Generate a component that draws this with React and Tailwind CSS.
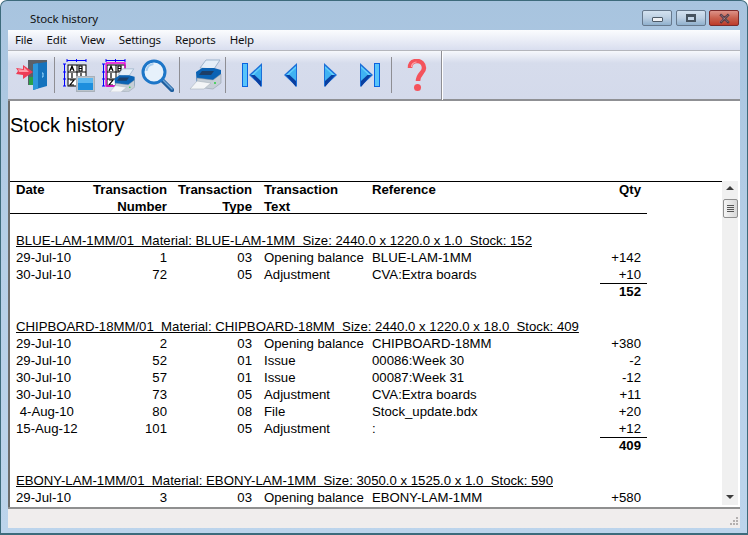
import React from 'react';

const groups = [
  {
    title: 'BLUE-LAM-1MM/01  Material: BLUE-LAM-1MM  Size: 2440.0 x 1220.0 x 1.0  Stock: 152',
    rows: [
      ['29-Jul-10', '1', '03', 'Opening balance', 'BLUE-LAM-1MM', '+142'],
      ['30-Jul-10', '72', '05', 'Adjustment', 'CVA:Extra boards', '+10'],
    ],
    total: '152',
  },
  {
    title: 'CHIPBOARD-18MM/01  Material: CHIPBOARD-18MM  Size: 2440.0 x 1220.0 x 18.0  Stock: 409',
    rows: [
      ['29-Jul-10', '2', '03', 'Opening balance', 'CHIPBOARD-18MM', '+380'],
      ['29-Jul-10', '52', '01', 'Issue', '00086:Week 30', '-2'],
      ['30-Jul-10', '57', '01', 'Issue', '00087:Week 31', '-12'],
      ['30-Jul-10', '73', '05', 'Adjustment', 'CVA:Extra boards', '+11'],
      ['\u00a04-Aug-10', '80', '08', 'File', 'Stock_update.bdx', '+20'],
      ['15-Aug-12', '101', '05', 'Adjustment', ':', '+12'],
    ],
    total: '409',
  },
  {
    title: 'EBONY-LAM-1MM/01  Material: EBONY-LAM-1MM  Size: 3050.0 x 1525.0 x 1.0  Stock: 590',
    rows: [['29-Jul-10', '3', '03', 'Opening balance', 'EBONY-LAM-1MM', '+580']],
  },
];

const Sep = ({ className }) => <div className={`w-px h-[36px] bg-[#8e8e94] shrink-0 ${className}`} />;

const MiniGrid = () => (
  <g>
    <rect x="5" y="6" width="18" height="21" fill="#fff" stroke="#000" />
    <path d="M14 6v21M5 13h18M5 20h18" stroke="#000" />
    <path d="M7 12l2-5 2 5M8 10h2M16 7h3v5h-3zM16 9.500h3M9 14v5M18 14v5M7 21h4l-4 5h4" stroke="#000" fill="none" strokeWidth="1.2" />
    <path d="M4 1.500h19M4 0v3M13.500 0v3M23 0v3M1.500 5v22M0 5h3M0 13h3M0 20h3M0 27h3" stroke="#0000ff" fill="none" />
  </g>
);

const PrinterShape = ({ x = 0, y = 0, s = 1 }) => (
  <g transform={`translate(${x} ${y}) scale(${s})`}>
    <path d="M11 9l6-8h14l-6 9z" fill="#e4eef8" stroke="#9fb5cc" />
    <path d="M7 13l6-4h12l7 2v11l-8 6H8z" fill="#0b63b4" />
    <path d="M8 19l16 2 8-6v9l-8 6-16-2z" fill="#c6ced6" stroke="#8a97a4" strokeWidth=".5" />
    <path d="M13 12h12l-3 4H10z" fill="#1d3f68" />
    <path d="M8 22L1 30h14l7-6z" fill="#f3f5f7" stroke="#a8b3bd" strokeWidth=".6" />
    <circle cx="26" cy="24" r="1" fill="#2bd23f" />
  </g>
);

const PrinterIcon = () => (
  <svg width="33" height="33" viewBox="0 0 33 33" className="shrink-0">
    <PrinterShape />
  </svg>
);

const ExitIcon = () => (
  <svg width="32" height="33" viewBox="0 0 32 33" className="shrink-0">
    <path d="M12 1h19v4H17v21h-5z" fill="#5a6068" />
    <rect x="13" y="18" width="4" height="8" fill="#2aa14a" />
    <path d="M17 5l14-2v24l-14 4z" fill="#1573bd" />
    <path d="M17 5l5-.7v25.300l-5 1.400z" fill="#2d97dc" />
    <path d="M26 14h1v4h-1" stroke="#9fdcff" fill="none" />
    <path d="M0 9l7 1V6l10 7-10 7v-4l-7-1 2-3z" fill="#ee3c55" />
    <path d="M2 10l6 1V8l5 5H3z" fill="#ff9aa6" />
  </svg>
);

const GridIcon = () => (
  <svg width="32" height="33" viewBox="0 0 32 33" className="shrink-0">
    <MiniGrid />
    <rect x="13.500" y="17.500" width="18" height="15" fill="#bcc4cc" stroke="#a9b1ba" />
    <rect x="15" y="19" width="15" height="12" fill="#1e8fdd" />
    <rect x="15" y="19" width="15" height="5" fill="#5cb8f0" />
  </svg>
);

const PrintGridIcon = () => (
  <svg width="33" height="33" viewBox="0 0 33 33" className="shrink-0">
    <MiniGrid />
    <path d="M4 4h19v9M4 4v23h9" stroke="#f000d8" strokeWidth="1.300" fill="none" />
    <PrinterShape x={7} y={9} s={0.8} />
  </svg>
);

const Magnifier = () => (
  <svg width="33" height="33" viewBox="0 0 33 33" className="shrink-0">
    <path d="M20 20l11 11" stroke="#1f5f9f" strokeWidth="4.500" strokeLinecap="round" />
    <path d="M21 20l10 10" stroke="#6fa5d6" strokeWidth="1.500" strokeLinecap="round" />
    <circle cx="13" cy="13" r="11" fill="#e6f1fb" stroke="#1d76c8" strokeWidth="3" />
    <path d="M5.500 12a8 8 0 0 1 7-7" stroke="#a8cdee" strokeWidth="2" fill="none" />
  </svg>
);

const NavIcon = ({ dir, bar, width }) => {
  const body = (
    <g>
      {bar && <rect x="0.500" y="0.500" width="5" height="23" fill="#58c4fa" stroke="#0a63e0" />}
      <path d={bar ? 'M20 0v24L7 12z' : 'M14 0v24L1 12z'} fill="#1b6fd8" />
      <path d={bar ? 'M19 3v9H9z' : 'M13 3v9H3z'} fill="#62d0fb" />
      <path d={bar ? 'M9 12h10v12z' : 'M3 12h10v12z'} fill="#0a3fa0" />
      <path d={bar ? 'M19 5v13l-7-6.500z' : 'M13 5v13l-7-6.500z'} fill="#3fb2f2" />
    </g>
  );
  return (
    <svg width={width} height="24" viewBox={`0 0 ${width} 24`} className="shrink-0">
      {dir === 'left' ? body : <g transform={`translate(${width} 0) scale(-1 1)`}>{body}</g>}
    </svg>
  );
};

const Question = () => (
  <svg width="20" height="33" viewBox="0 0 20 33" className="shrink-0">
    <path d="M3 9c0-5 3-7 7-7s7 3 7 7c0 5-6 6-6 13" fill="none" stroke="#f4535c" strokeWidth="4.500" />
    <path d="M4.500 8c0-3 2.500-5 5-5" fill="none" stroke="#ffa8ac" strokeWidth="1.200" />
    <circle cx="10.500" cy="28.500" r="3.500" fill="#f4535c" />
  </svg>
);

const WinButton = ({ red, children }) => (
  <div className={`w-[30px] h-[16px] rounded-[2px] border flex items-center justify-center ${red ? 'border-[#7a2a2a] bg-gradient-to-b from-[#dd9288] via-[#c9614f] to-[#bd3a2a]' : 'border-[#66788c] bg-gradient-to-b from-[#d3e2f0] via-[#bccfe2] to-[#8fb0cd]'}`}>
    {children}
  </div>
);

const Cells = ({ row }) => (
  <div className="flex h-[17px] items-center">
    <div className="w-[6px]" />
    <div className="w-[62px] whitespace-pre">{row[0]}</div>
    <div className="w-[89px] text-right">{row[1]}</div>
    <div className="w-[85px] text-right">{row[2]}</div>
    <div className="w-[12px]" />
    <div className="w-[108px] whitespace-pre">{row[3]}</div>
    <div className="w-[200px]">{row[4]}</div>
    <div className="w-[69px] text-right">{row[5]}</div>
  </div>
);

export default function App() {
  return (
    <div className="w-[748px] h-[535px] overflow-hidden flex flex-col rounded-t-[7px] border border-b-[2px] border-[#3d6b7c] bg-gradient-to-b from-[#a8c4df] via-[#b6cfe7] to-[#bcd4ec] px-[7px] pb-[5px] font-['Liberation_Sans',sans-serif] text-[13.2px] text-[#000]">
      {/* title bar */}
      <div className="h-[29px] flex shrink-0 items-start">
        <span className="ml-[22px] mt-[10px] font-['Noto_Sans',sans-serif] text-[11.5px] leading-[16px] tracking-[-0.1px] text-[#111]">Stock history</span>
        <div className="ml-auto mt-[9px] mr-[1px] flex">
          <WinButton>
            <div className="w-[11px] h-[5px] bg-[#eef1f5] border border-[#4e5b68] rounded-[1px] mt-[3px]" />
          </WinButton>
          <div className="w-[4px]" />
          <WinButton>
            <div className="w-[10px] h-[8px] border-[2px] border-t-[3px] border-[#46535f] bg-[#c4d6e8]" />
          </WinButton>
          <div className="w-[3px]" />
          <WinButton red>
            <span className="text-[15px] leading-none font-bold text-[#e9e9ec] [-webkit-text-stroke:0.5px_#55303a]">✕</span>
          </WinButton>
        </div>
      </div>

      <div className="flex-1 flex flex-col min-h-0 bg-white">
        {/* menu */}
        <div className="h-[20px] shrink-0 flex items-center gap-[14px] pl-[7px] bg-gradient-to-b from-[#fbfcfe] to-[#d9deef] font-['Noto_Sans',sans-serif] text-[11.5px] tracking-[-0.2px] text-[#111]">
          <span>File</span>
          <span>Edit</span>
          <span>View</span>
          <span>Settings</span>
          <span>Reports</span>
          <span>Help</span>
        </div>
        <div className="h-[1px] bg-[#b4b6bc] shrink-0" />

        {/* toolbar */}
        <div className="h-[50px] shrink-0 flex items-center border-b-[2px] border-[#8f9094] bg-gradient-to-b from-[#f6f8fc] from-0% via-[#d6dcec] via-25% to-[#d4daeb] pl-[8px]">
          <ExitIcon />
          <Sep className="ml-[6px]" />
          <div className="ml-[8px]"><GridIcon /></div>
          <div className="ml-[7px]"><PrintGridIcon /></div>
          <div className="ml-[6px]"><Magnifier /></div>
          <Sep className="ml-[5px]" />
          <div className="ml-[9px]"><PrinterIcon /></div>
          <Sep className="ml-[3px]" />
          <div className="ml-[16px]"><NavIcon dir="left" bar width={20} /></div>
          <div className="ml-[21px]"><NavIcon dir="left" width={15} /></div>
          <div className="ml-[25px]"><NavIcon dir="right" width={15} /></div>
          <div className="ml-[22px]"><NavIcon dir="right" bar width={20} /></div>
          <Sep className="ml-[11px]" />
          <div className="ml-[15px]"><Question /></div>
          <div className="ml-[14px] w-[2px] h-[49px] border-l border-[#8e8e94] bg-white shrink-0" />
        </div>

        {/* report */}
        <div className="flex-1 min-h-0 flex border-l-[2px] border-[#6d6d6d]">
          <div className="flex-1 min-w-0 overflow-hidden">
            <div className="h-[80px] text-[20px] leading-[23px] pt-[13px] whitespace-pre">Stock history</div>
            <div className="border-t border-[#000] font-bold">
              <div className="w-[637px] border-b border-[#000] h-[33px] -mt-[1px]">
                <Cells row={['Date', 'Transaction', 'Transaction', 'Transaction', 'Reference', 'Qty']} />
                <Cells row={['', 'Number', 'Type', 'Text', '', '']} />
              </div>
            </div>
            <div className="w-[637px]">
              {groups.map(g => (
                <div key={g.title} className="pt-[18px]">
                  <div className="h-[17px] flex items-center">
                    <span className="ml-[6px] underline whitespace-pre underline-offset-[1px]">{g.title}</span>
                  </div>
                  {g.rows.map((r, i) => <Cells key={i} row={r} />)}
                  {g.total && (
                    <div className="flex justify-end h-[17px] font-bold">
                      <div className="w-[47px] border-t border-[#000] text-right pr-[6px] leading-[15px]">{g.total}</div>
                    </div>
                  )}
                </div>
              ))}
            </div>
          </div>

          {/* scrollbar */}
          <div className="w-[18px] shrink-0 bg-white">
            <div className="w-[16px] h-[324px] mt-[80px] bg-[#f0f0f0] flex flex-col items-center">
              <div className="mt-[5px] w-0 h-0 border-x-[4px] border-x-transparent border-b-[4px] border-b-[#3c3c3c]" />
              <div className="mt-[9px] w-[15px] h-[19px] border border-[#8f8f8f] rounded-[2px] bg-gradient-to-r from-[#f4f4f4] to-[#d8d8d8] flex flex-col items-center justify-center gap-[1px]">
                <div className="w-[7px] h-[1px] bg-[#555]" />
                <div className="w-[7px] h-[1px] bg-[#555]" />
                <div className="w-[7px] h-[1px] bg-[#555]" />
                <div className="w-[7px] h-[1px] bg-[#555]" />
              </div>
              <div className="mt-auto mb-[6px] w-0 h-0 border-x-[4px] border-x-transparent border-t-[4px] border-t-[#3c3c3c]" />
            </div>
          </div>
        </div>

        {/* status bar */}
        <div className="h-[21px] shrink-0 border-t-[2px] border-[#8f8f8f] bg-[#f0eded] flex justify-end items-end pr-[1px] pb-[1px]">
          <svg width="11" height="11" viewBox="0 0 11 11">
            <path d="M8 1h2v2H8zM5 4h2v2H5zM8 4h2v2H8zM2 7h2v2H2zM5 7h2v2H5zM8 7h2v2H8z" fill="#b4b0b0" />
          </svg>
        </div>
      </div>
    </div>
  );
}
